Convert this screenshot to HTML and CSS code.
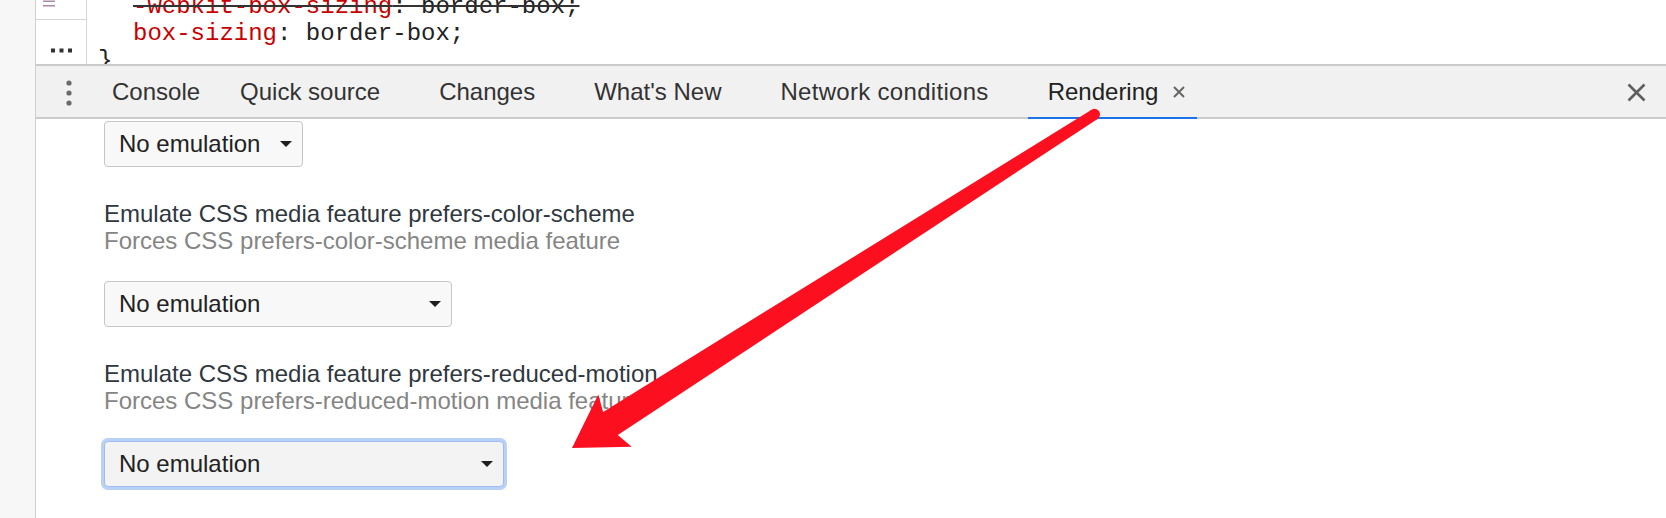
FILE: index.html
```html
<!DOCTYPE html>
<html>
<head>
<meta charset="utf-8">
<title>Rendering</title>
<link rel="stylesheet" href="styles.css">
</head>
<body>
<div class="app">
  <div class="side-strip"></div>
  <div class="main">
    <div class="editor">
      <div class="gutter">
        <div class="gutter-cell gutter-cell--top">
          <svg class="gutter-icon" width="12" height="8" viewBox="0 0 12 8"><path d="M0 1.2H12M0 5.8H12" stroke="#a88aa8" stroke-width="1.6"/></svg>
        </div>
        <div class="gutter-cell gutter-cell--more">
          <svg width="21" height="5" viewBox="0 0 21 5"><rect x="0" y="0.5" width="4" height="4" fill="#333"/><rect x="8.5" y="0.5" width="4" height="4" fill="#333"/><rect x="17" y="0.5" width="4" height="4" fill="#333"/></svg>
        </div>
      </div>
      <div class="code">
        <div class="code-line code-line--indent code-line--struck"><span class="prop">-webkit-box-sizing</span>: border-box;</div>
        <div class="code-line code-line--indent"><span class="prop">box-sizing</span>: border-box;</div>
        <div class="code-line">}</div>
      </div>
    </div>
    <div class="tabbar">
      <div class="tabbar-menu">
        <svg width="6" height="26" viewBox="0 0 6 26"><circle cx="3" cy="3" r="2.6" fill="#6a6a6a"/><circle cx="3" cy="13" r="2.6" fill="#6a6a6a"/><circle cx="3" cy="23" r="2.6" fill="#6a6a6a"/></svg>
      </div>
      <div class="tab">Console</div>
      <div class="tab tab--closeable">Quick source<span class="tab-close"></span></div>
      <div class="tab tab--closeable">Changes<span class="tab-close"></span></div>
      <div class="tab tab--closeable">What's New<span class="tab-close"></span></div>
      <div class="tab tab--closeable tab--wide">Network conditions<span class="tab-close"></span></div>
      <div class="tab tab--closeable tab--selected">Rendering<span class="tab-close"><svg width="12" height="12" viewBox="0 0 12 12"><path d="M1 1L11 11M11 1L1 11" stroke="#666" stroke-width="2"/></svg></span></div>
      <div class="tabbar-close">
        <svg width="19" height="19" viewBox="0 0 19 19"><path d="M1.5 1.5L17.5 17.5M17.5 1.5L1.5 17.5" stroke="#5f5f5f" stroke-width="2.6"/></svg>
      </div>
    </div>
    <div class="panel">
      <div class="select select--sm"><span>No emulation</span><span class="select-arrow"></span></div>
      <div class="setting">
        <div class="setting-title">Emulate CSS media feature prefers-color-scheme</div>
        <div class="setting-desc">Forces CSS prefers-color-scheme media feature</div>
        <div class="select select--md"><span>No emulation</span><span class="select-arrow"></span></div>
      </div>
      <div class="setting">
        <div class="setting-title">Emulate CSS media feature prefers-reduced-motion</div>
        <div class="setting-desc">Forces CSS prefers-reduced-motion media feature</div>
        <div class="select select--lg select--focused"><span>No emulation</span><span class="select-arrow"></span></div>
      </div>
    </div>
  </div>
</div>
<svg class="annotation" width="1666" height="518" viewBox="0 0 1666 518">
  <polygon points="572,448 598.3,394.4 603.1,411.9 1091.6,109.7 1097.5,118.9 617.8,435.0 631.7,446.7" fill="#fc0f1f"/>
  <circle cx="1094.5" cy="114.3" r="5.5" fill="#fc0f1f"/>
</svg>
</body>
</html>
```

FILE: styles.css
```css
* { box-sizing: border-box; }
html, body { margin: 0; padding: 0; }
body {
  width: 1666px;
  height: 518px;
  overflow: hidden;
  background: #fff;
  font-family: "Liberation Sans", Arial, sans-serif;
  position: relative;
}
.app { display: flex; height: 100%; }
.side-strip {
  width: 36px;
  flex: none;
  background: #f7f7f7;
  border-right: 1px solid #d0d0d0;
}
.main { flex: 1; display: flex; flex-direction: column; min-width: 0; }

/* editor */
.editor { height: 64px; flex: none; display: flex; align-items: flex-start; overflow: hidden; }
.gutter {
  width: 51px;
  height: 64px;
  flex: none;
  border-right: 1px solid #d6d6d6;
  display: flex;
  flex-direction: column;
}
.gutter-cell--top { height: 20px; border-bottom: 1px solid #d6d6d6; padding-left: 7px; }
.gutter-icon { display: block; }
.gutter-cell--more { flex: 1; display: flex; justify-content: center; padding-top: 28px; }
.gutter-cell--more svg { display: block; }
.code {
  margin-top: -7px;
  padding-left: 11px;
  font-family: "Liberation Mono", monospace;
  font-size: 24px;
  line-height: 27px;
  color: #222;
}
.code-line { white-space: pre; }
.code-line--indent { padding-left: 35px; }
.code-line--struck {
  text-decoration: line-through;
  text-decoration-color: #333;
  text-decoration-thickness: 2px;
}
.prop { color: #c80000; }

/* tab bar */
.tabbar {
  height: 55px;
  flex: none;
  display: flex;
  background: #f1f1f1;
  border-top: 2px solid #cbcbcb;
  border-bottom: 2px solid #cbcbcb;
  font-size: 24px;
  color: #333;
}
.tabbar-menu {
  width: 56px;
  display: flex;
  align-items: center;
  justify-content: center;
  padding: 2px 0 0 10px;
}
.tabbar-menu svg { display: block; }
.tab { display: flex; align-items: center; padding: 0 20px; white-space: nowrap; }
.tab--closeable { padding-right: 10px; }
.tab--wide { letter-spacing: 0.3px; }
.tab-close {
  width: 16px;
  height: 16px;
  margin-left: 13px;
  display: flex;
  align-items: center;
  justify-content: center;
  visibility: hidden;
}
.tab--selected { border-bottom: 2px solid #1a73e8; margin-bottom: -2px; color: #222; }
.tab--selected .tab-close { visibility: visible; }
.tabbar-close { margin-left: auto; padding: 1px 20px 0 0; display: flex; align-items: center; }
.tabbar-close svg { display: block; }

/* panel */
.panel { flex: 1; padding: 2px 0 0 68px; font-size: 24px; }
.setting { margin-top: 33px; }
.setting-title { line-height: 27px; color: #2f3740; white-space: nowrap; }
.setting-desc { line-height: 28px; color: #858585; white-space: nowrap; }
.setting .select { margin-top: 26px; }
.select {
  height: 46px;
  border: 1px solid #c6c6c6;
  border-radius: 4px;
  background: #f8f8f8;
  display: flex;
  align-items: center;
  justify-content: space-between;
  padding: 0 10px 0 14px;
  color: #222;
}
.select-arrow {
  width: 0;
  height: 0;
  border-left: 6px solid transparent;
  border-right: 6px solid transparent;
  border-top: 6px solid #1e1e1e;
}
.select--sm { width: 199px; }
.select--md { width: 348px; }
.select--lg { width: 400px; }
.select--focused {
  background: #f3f3f3;
  border-color: #9dbdf2;
  box-shadow: 0 0 0 3px #b9d1f7;
}

/* annotation overlay */
.annotation { position: absolute; top: 0; left: 0; pointer-events: none; }
```
